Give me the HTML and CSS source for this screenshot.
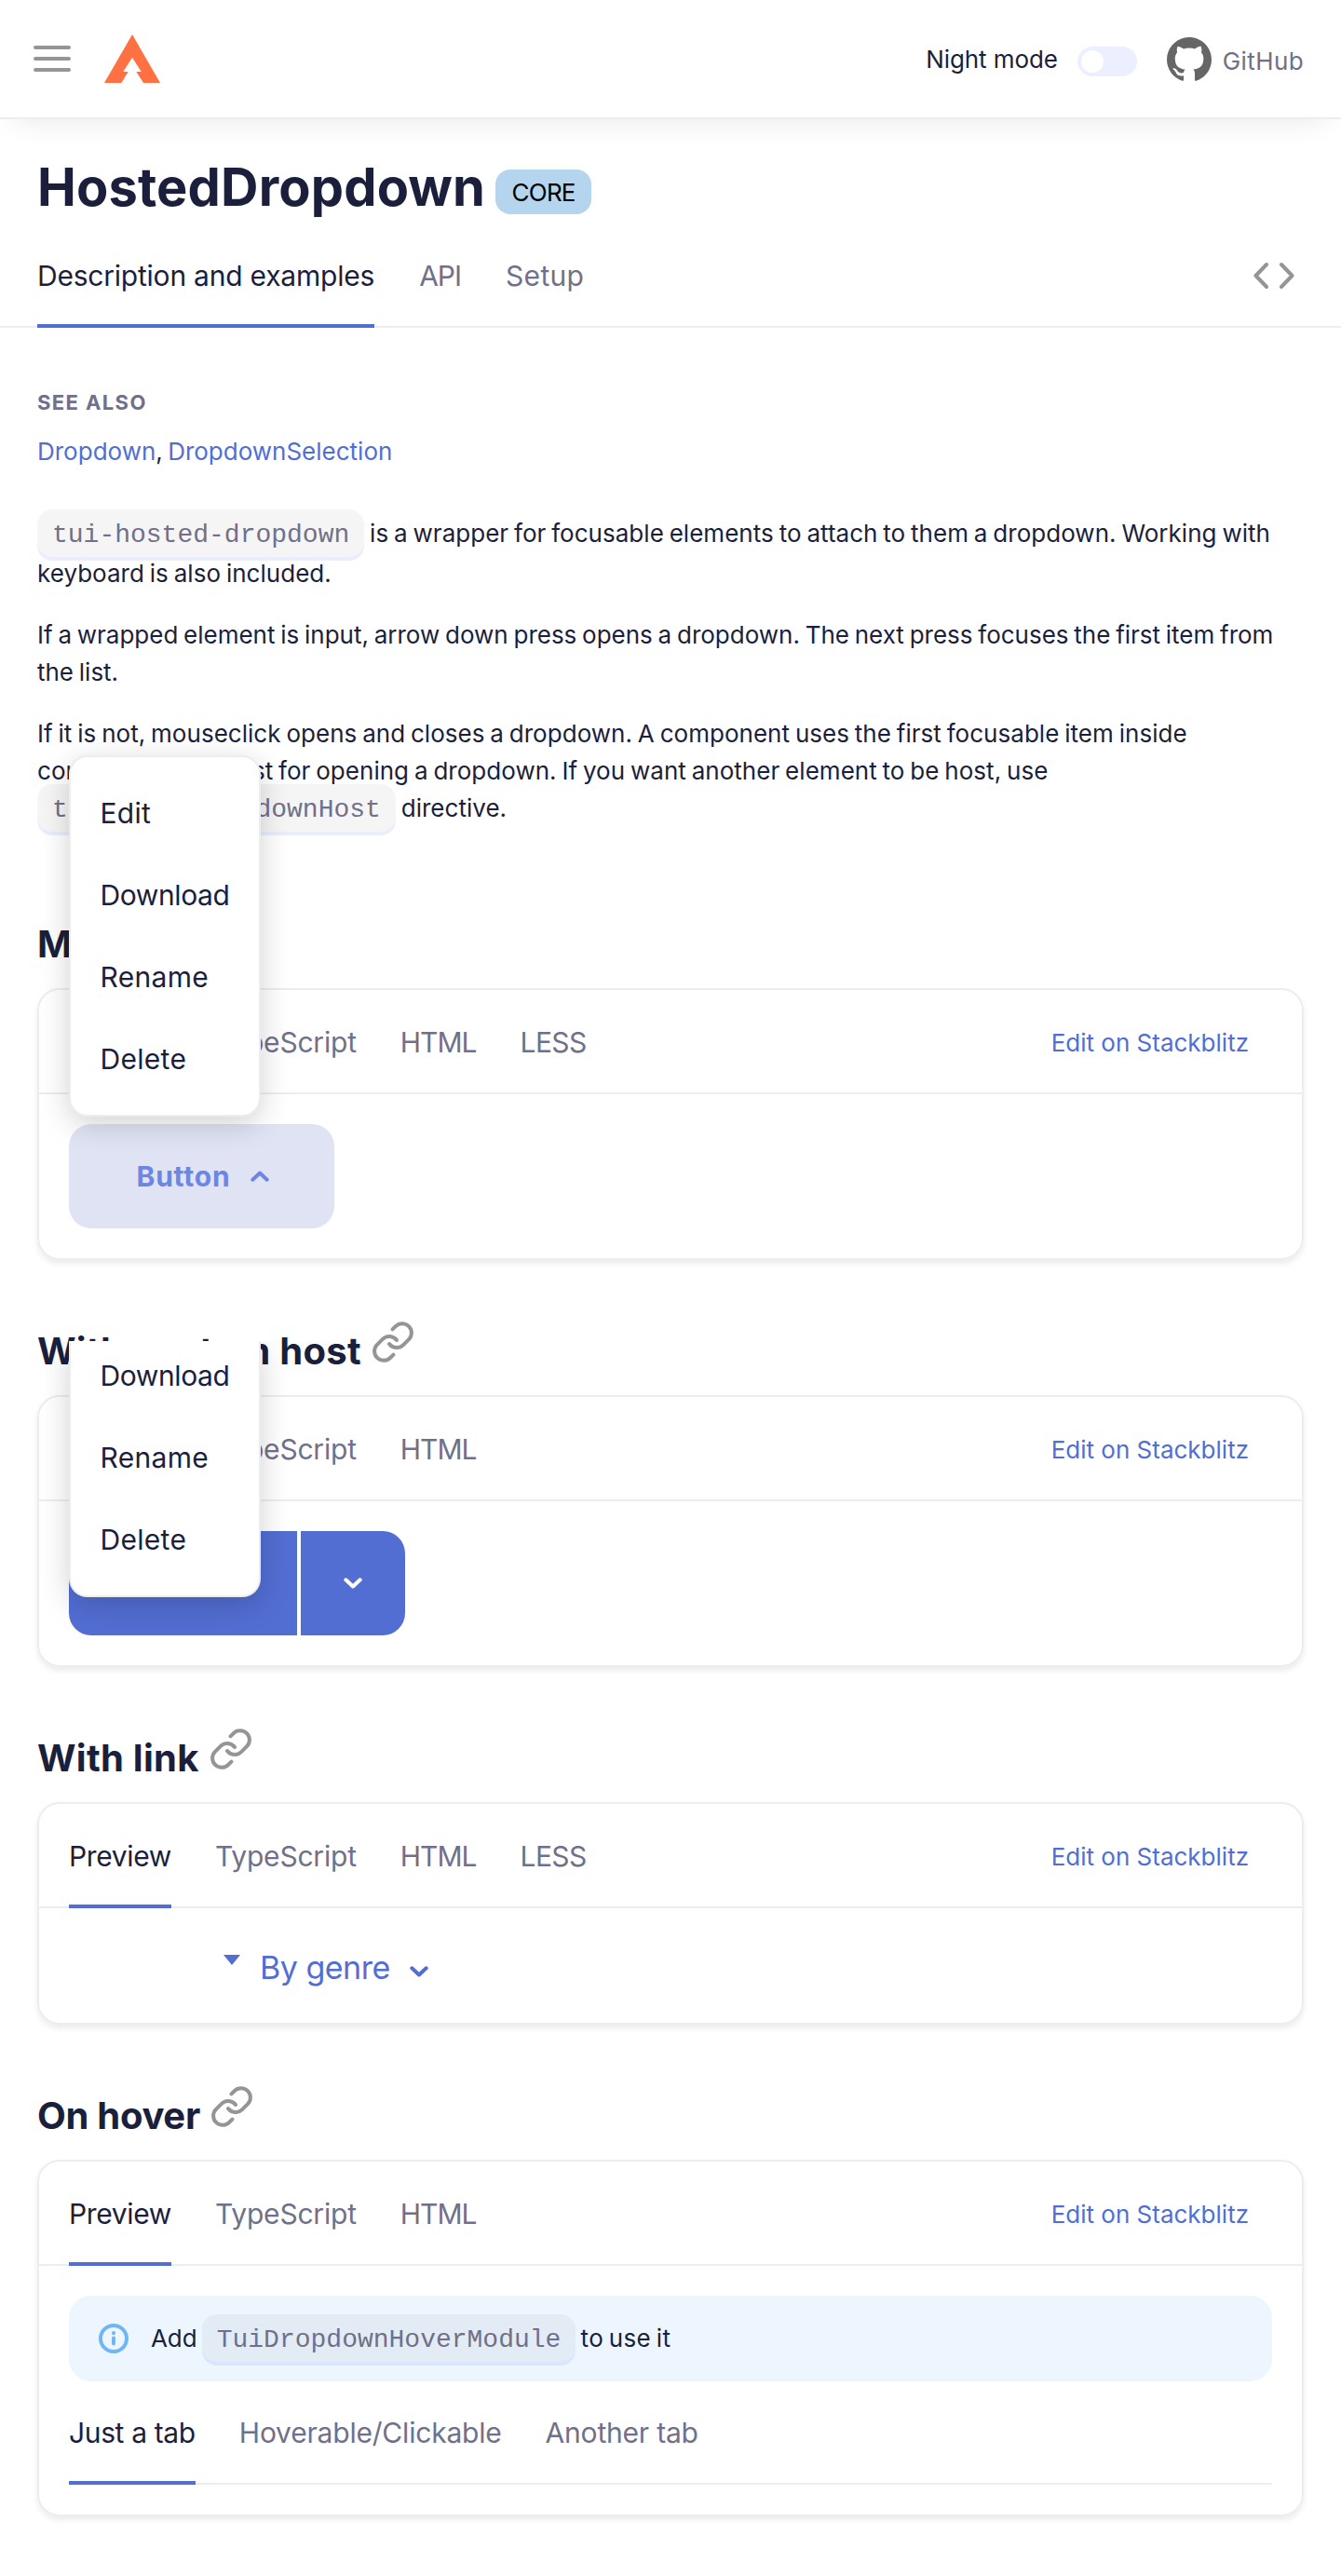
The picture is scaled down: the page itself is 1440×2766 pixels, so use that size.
FILE: index.html
```html
<!DOCTYPE html>
<html lang="en">
<head>
<meta charset="utf-8">
<title>HostedDropdown</title>
<link rel="stylesheet" href="styles.css">
</head>
<body>
<svg class="sprite" width="0" height="0">
  <symbol id="link" viewBox="0 0 24 24"><path d="M10 13a5 5 0 0 0 7.54.54l3-3a5 5 0 0 0-7.07-7.07l-1.72 1.71M14 11a5 5 0 0 0-7.54-.54l-3 3a5 5 0 0 0 7.07 7.07l1.71-1.71"/></symbol>
  <symbol id="down" viewBox="0 0 20 12"><path d="M2.3 2.3 10 9.5l7.7-7.2"/></symbol>
  <symbol id="up" viewBox="0 0 20 12"><path d="M2.3 9.7 10 2.5l7.7 7.2"/></symbol>
</svg>
<header class="header">
  <div class="burger"><i></i><i></i><i></i></div>
  <svg class="logo" viewBox="0 0 60 52"><path d="M30 0 60 52H42L34.3 40h5.4L30 24.700 20.300 40h5.400L18.300 52H0Z"/></svg>
  <span class="night">Night mode</span>
  <span class="toggle"><i></i></span>
  <a class="github"><svg width="48" height="48" viewBox="0 0 16 16"><path d="M8 0C3.580 0 0 3.580 0 8c0 3.540 2.290 6.530 5.470 7.590.4.070.55-.17.55-.38 0-.19-.01-.82-.01-1.490-2.010.37-2.530-.49-2.690-.94-.09-.23-.48-.94-.82-1.130-.28-.15-.68-.52-.01-.53.63-.01 1.080.58 1.230.82.72 1.210 1.870.87 2.330.66.07-.52.28-.87.51-1.070-1.780-.2-3.640-.89-3.640-3.950 0-.87.31-1.590.82-2.150-.08-.2-.36-1.020.08-2.120 0 0 .67-.21 2.200.82.64-.18 1.320-.27 2-.27s1.360.09 2 .27c1.530-1.040 2.200-.82 2.200-.82.44 1.100.16 1.920.08 2.120.51.56.82 1.270.82 2.150 0 3.070-1.870 3.750-3.650 3.950.29.25.54.73.54 1.480 0 1.070-.01 1.930-.01 2.200 0 .21.15.46.55.38A8.010 8.010 0 0 0 16 8c0-4.420-3.580-8-8-8Z"/></svg><span>GitHub</span></a>
</header>
<main>
  <div class="title"><h1>HostedDropdown</h1><span class="badge">CORE</span></div>
  <nav class="tabs page-tabs">
    <a class="tab active">Description and examples</a><a class="tab caps">API</a><a class="tab wide">Setup</a>
    <svg class="code-icon" width="44" height="30" viewBox="0 0 44 30"><path d="M14 3 2.500 15 14 27M30 3l11.500 12L30 27"/></svg>
  </nav>
  <div class="content">
    <div class="see">SEE ALSO</div>
    <div class="see-links"><a>Dropdown</a>, <a>DropdownSelection</a></div>
    <p class="intro"><code>tui-hosted-dropdown</code> is a wrapper for focusable elements to attach to them a dropdown. Working with<br>keyboard is also included.</p>
    <p class="tight">If a wrapped element is input, arrow down press opens a dropdown. The next press focuses the first item from<br>the list.</p>
    <p>If it is not, mouseclick opens and closes a dropdown. A component uses the first focusable item inside<br>component as a host for opening a dropdown. If you want another element to be host, use<br><code>tuiHostedDropdownHost</code> directive.</p>

    <section class="example first">
      <h2>Menu</h2>
      <div class="card">
        <nav class="tabs"><a class="tab active">Preview</a><a class="tab">TypeScript</a><a class="tab caps">HTML</a><a class="tab less">LESS</a><a class="edit">Edit on Stackblitz</a></nav>
        <div class="demo">
          <div class="host">
            <button class="button secondary">Button<svg class="chevron"><use href="#up"/></svg></button>
            <ul class="dropdown"><li>Edit</li><li class="long">Download</li><li>Rename</li><li>Delete</li></ul>
          </div>
        </div>
      </div>
    </section>

    <section class="example">
      <h2>With custom host <svg class="link-icon"><use href="#link"/></svg></h2>
      <div class="card">
        <nav class="tabs"><a class="tab active">Preview</a><a class="tab">TypeScript</a><a class="tab caps">HTML</a><a class="edit">Edit on Stackblitz</a></nav>
        <div class="demo">
          <div class="host split">
            <button class="button primary main-part"></button>
            <button class="button primary arrow-part"><svg class="chevron"><use href="#down"/></svg></button>
            <div class="dropdown cut"><ul><li class="long">Download</li><li>Rename</li><li>Delete</li></ul></div>
          </div>
        </div>
      </div>
    </section>

    <section class="example">
      <h2>With link <svg class="link-icon"><use href="#link"/></svg></h2>
      <div class="card">
        <nav class="tabs"><a class="tab active">Preview</a><a class="tab">TypeScript</a><a class="tab caps">HTML</a><a class="tab less">LESS</a><a class="edit">Edit on Stackblitz</a></nav>
        <div class="demo genre"><i class="triangle"></i><a>By genre</a><svg class="chevron"><use href="#down"/></svg></div>
      </div>
    </section>

    <section class="example">
      <h2 class="hover-title">On hover <svg class="link-icon"><use href="#link"/></svg></h2>
      <div class="card">
        <nav class="tabs"><a class="tab active">Preview</a><a class="tab">TypeScript</a><a class="tab caps">HTML</a><a class="edit">Edit on Stackblitz</a></nav>
        <div class="demo">
          <div class="note">
            <svg width="32" height="32" viewBox="0 0 32 32"><circle cx="16" cy="16" r="14"/><path d="M16 15.500v6M16 10v.3"/></svg>
            <span>Add <code>TuiDropdownHoverModule</code> <span class="after">to use it</span></span>
          </div>
          <nav class="tabs inner"><a class="tab active">Just a tab</a><a class="tab">Hoverable/Clickable</a><a class="tab">Another tab</a></nav>
        </div>
      </div>
    </section>
  </div>
</main>
</body>
</html>
```
FILE: styles.css
```css
* { box-sizing: border-box; }
body {
  margin: 0;
  background: #fff;
  color: #1b1f3b;
  font: 26px/40px Inter, "Liberation Sans", sans-serif;
}
h1, h2, p, ul { margin: 0; padding: 0; list-style: none; }
.sprite { position: absolute; }

.header {
  display: flex;
  align-items: center;
  height: 128px;
  padding: 0 40px 0 36px;
  border-bottom: 2px solid #ededed;
  box-shadow: 0 16px 32px -16px rgba(0, 0, 0, .1);
}
.burger { display: flex; flex-direction: column; gap: 8px; width: 40px; }
.burger i { height: 4px; border-radius: 2px; background: #959595; }
.logo { width: 60px; height: 52px; margin-left: 36px; fill: #ff7043; }
.night { margin-left: auto; padding-top: 2px; letter-spacing: -.1px; }
.toggle {
  width: 64px;
  height: 32px;
  margin: 6px 32px 0 21px;
  padding: 4px;
  border-radius: 16px;
  background: #ebefff;
}
.toggle i { display: block; width: 24px; height: 24px; border-radius: 50%; background: #fff; }
.github { display: flex; align-items: center; gap: 12px; color: #707084; letter-spacing: .4px; }
.github svg { fill: #666; margin-top: 2px; }
.github span { padding-top: 6px; }

.title { display: flex; gap: 11px; height: 71px; margin: 41px 40px 0; }
h1 { font-size: 56px; line-height: 64px; font-weight: 700; letter-spacing: .15px; }
.badge {
  width: 103px;
  height: 48px;
  margin-top: 13px;
  border-radius: 16px;
  background: #b5d4ed;
  color: #000;
  line-height: 49px;
  text-align: center;
  letter-spacing: -.8px;
}

.tabs {
  display: flex;
  gap: 47px;
  height: 112px;
  padding: 0 32px;
  border-bottom: 2px solid #ededed;
  font-size: 30px;
  line-height: 112px;
  letter-spacing: -.2px;
}
.tab { height: 112px; color: #70708a; white-space: nowrap; }
.tab.active { color: #1b1f3b; border-bottom: 4px solid #526ed3; letter-spacing: -.36px; }
.caps { letter-spacing: -1px; }
.less { letter-spacing: -.6px; }
.wide { letter-spacing: .3px; }
.page-tabs { gap: 48px; padding: 0 50px 0 40px; }
.page-tabs .tab.active { letter-spacing: -.22px; }
.code-icon {
  margin: 41px 0 0 auto;
  fill: none;
  stroke: #959595;
  stroke-width: 4;
  stroke-linecap: round;
  stroke-linejoin: round;
}

.content { padding: 66px 40px 61px; }
.see { color: #70708a; font-size: 22px; line-height: 29px; font-weight: 700; letter-spacing: 1.4px; }
.see-links { margin-top: 18px; word-spacing: -2px; }
a { color: #526ed3; }
p { margin-top: 26px; letter-spacing: .03px; word-spacing: -1.5px; white-space: nowrap; }
p.tight { letter-spacing: -.01px; }
p.intro { margin-top: 48px; }
.intro code { line-height: 42px; }
code {
  padding: 12px 16px 8px;
  border-radius: 16px;
  background: rgba(0, 0, 0, .04);
  box-shadow: 0 4px rgba(65, 95, 255, .11);
  color: #70708a;
  font: 28px/38px "Liberation Mono", monospace;
  letter-spacing: 0;
}

.example { margin-top: 73px; }
.example.first { margin-top: 100px; }
h2 { height: 72px; padding-top: 1px; font-size: 40px; line-height: 48px; letter-spacing: .27px; display: flex; }
.hover-title { letter-spacing: -.3px; }
.link-icon {
  width: 48px;
  height: 48px;
  margin: -10px 0 0 10px;
  fill: none;
  stroke: #959595;
  stroke-width: 2;
  stroke-linecap: round;
  stroke-linejoin: round;
}
.card { border: 2px solid #ededed; border-radius: 24px; box-shadow: 0 4px 6px rgba(0, 0, 0, .08); }
.edit { height: 110px; margin-left: auto; padding: 1px 25px 0 0; font-size: 26px; letter-spacing: 0; }
.demo { padding: 32px; }

.host { position: relative; display: inline-flex; vertical-align: top; }
.button {
  display: flex;
  align-items: center;
  justify-content: center;
  height: 112px;
  padding: 0;
  border: 0;
  border-radius: 24px;
  font: 700 30px Inter, sans-serif;
  letter-spacing: .8px;
}
.chevron {
  width: 20px;
  height: 12px;
  fill: none;
  stroke: currentColor;
  stroke-width: 4;
  stroke-linecap: round;
  stroke-linejoin: round;
}
.secondary { width: 285px; padding-left: 2px; gap: 21px; background: #e0e3f4; color: #6c86e2; }
.split { gap: 4px; }
.primary { background: #526ed3; color: #fff; }
.main-part { width: 245px; border-radius: 24px 0 0 24px; }
.arrow-part { width: 112px; border-radius: 0 24px 24px 0; }

.dropdown {
  position: absolute;
  z-index: 2;
  left: 0;
  bottom: calc(100% + 8px);
  width: 206px;
  padding: 16px 0;
  border: 2px solid #ededed;
  border-radius: 20px;
  background: #fff;
  box-shadow: 0 8px 32px rgba(0, 0, 0, .18);
}
.dropdown li { height: 88px; padding-left: 31.5px; font-size: 30px; line-height: 88px; letter-spacing: .3px; }
.dropdown li.long { letter-spacing: -.4px; }
.dropdown.cut {
  bottom: 41px;
  height: 275px;
  padding: 0;
  border-top: 0;
  border-radius: 0 0 20px 20px;
  clip-path: inset(0 -60px -60px);
}
.cut ul { margin-top: -7px; }

.genre { display: flex; align-items: center; height: 123px; padding: 4px 0 0 198px; color: #526ed3; font-size: 34px; letter-spacing: -.5px; }
.triangle { margin: 0 21px 16px 0; border: solid transparent; border-width: 11px 9px 0; border-top-color: #526ed3; }
.genre .chevron { margin: 8px 0 0 21px; }

.note { display: flex; align-items: center; gap: 24px; height: 92px; padding-left: 32px; border-radius: 24px; background: #edf6ff; letter-spacing: -.1px; word-spacing: -2px; }
.note svg { fill: none; stroke: #70b6f6; stroke-width: 4; stroke-linecap: round; }
.after { letter-spacing: .35px; }
.tabs.inner { height: 111px; padding: 0; line-height: 111px; }
.inner .tab { height: 111px; }
```
